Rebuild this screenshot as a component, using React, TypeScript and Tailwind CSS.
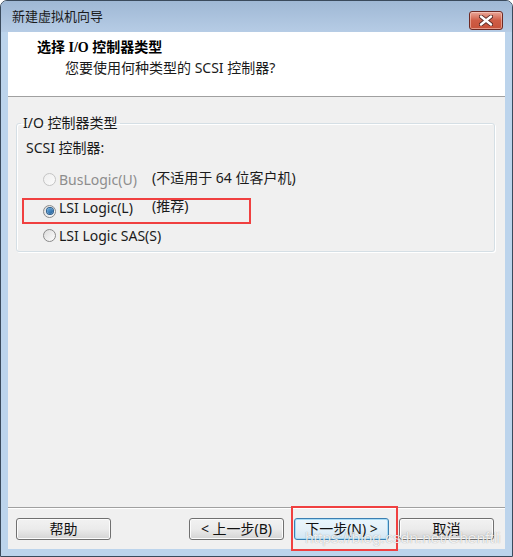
import React from "react";

const CJK = "font-['Noto_Sans','Noto_Sans_CJK_SC',sans-serif]";

function Radio({ checked, disabled }: { checked?: boolean; disabled?: boolean }) {
  return (
    <span
      className={
        "relative inline-flex items-center justify-center w-[13px] h-[13px] rounded-full border shrink-0 " +
        (disabled
          ? "border-[#c4c4c4] bg-gradient-to-br from-[#eeeeee] to-[#fbfbfb]"
          : "border-[#8a8a8a] bg-gradient-to-br from-[#dcdcdc] to-[#fdfdfd]")
      }
    >
      {checked && (
        <span className="w-[6px] h-[6px] rounded-full bg-gradient-to-br from-[#6fb3e6] to-[#1c5a96] ring-1 ring-[#2a5d8c]" />
      )}
    </span>
  );
}

function Btn({ children, def }: { children: React.ReactNode; def?: boolean }) {
  return (
    <div
      className={
        "w-[95px] h-[22px] rounded-[3px] border flex items-center justify-center text-[14px] leading-[18px] text-[#111] " +
        CJK +
        " " +
        (def
          ? "border-[#3c7fb1] bg-gradient-to-b from-[#eaf6fd] via-[#e4f0f8] to-[#d2e6f3] shadow-[inset_0_0_0_1px_#a8dcf6]"
          : "border-[#707070] bg-gradient-to-b from-[#f2f2f2] via-[#ebebeb] to-[#d4d4d4] shadow-[inset_0_0_0_1px_#fcfcfc]")
      }
    >
      {children}
    </div>
  );
}

export default function App() {
  return (
    <div className="relative w-[513px] h-[557px] bg-white">
      <div className="w-[513px] h-[557px] flex flex-col border border-[#3a4a5c] rounded-t-[7px] bg-[#bcd4ec] overflow-hidden">
        {/* title bar */}
        <div className="h-[31px] shrink-0 flex items-start justify-between pl-[11px] pr-[9px] bg-gradient-to-b from-[#9fb8d5] to-[#b6cce5]">
          <span className={"mt-[6px] text-[13px] leading-[18px] text-[#1a1a1a] " + CJK}>新建虚拟机向导</span>
          <div className="mt-[10px] w-[34px] h-[19px] rounded-[3px] border border-[#6e2a24] bg-gradient-to-b from-[#e9a799] via-[#cf5c45] to-[#c8523a] flex items-center justify-center shadow-[inset_0_0_0_1px_rgba(255,220,210,0.5)]">
            <svg width="14" height="11" viewBox="0 0 14 11">
              <path d="M2 1.5 L12 9.5 M12 1.5 L2 9.5" stroke="#5a2a25" strokeWidth="4.2" strokeLinecap="round" />
              <path d="M2 1.5 L12 9.5 M12 1.5 L2 9.5" stroke="#ffffff" strokeWidth="2.4" strokeLinecap="round" />
            </svg>
          </div>
        </div>

        {/* client */}
        <div className="flex-1 mx-[7px] mb-[7px] flex flex-col bg-[#f0f0f0]">
          {/* header */}
          <div className="h-[65px] shrink-0 bg-white border-b border-[#a0a0a0] pt-[7px]">
            <div className="pl-[29px] text-[14px] leading-[18px] font-bold text-[#000] font-['Liberation_Serif','Noto_Sans_CJK_SC',serif]">
              选择 I/O 控制器类型
            </div>
            <div className={"pl-[57px] mt-[2px] text-[14px] leading-[18px] text-[#1a1a1a] " + CJK}>
              您要使用何种类型的 SCSI 控制器?
            </div>
          </div>

          {/* body */}
          <div className="flex-1 flex flex-col">
            <fieldset className="ml-[8px] mr-[10px] mt-[17px] border border-[#d5dfe5] rounded-[3px] pl-[9px] pb-[1px] shadow-[inset_1px_1px_0_#ffffff,1px_1px_0_#ffffff]">
              <legend className={"-ml-[5px] px-[2px] text-[14px] leading-[18px] text-[#1a1a1a] " + CJK}>I/O 控制器类型</legend>
              <div className={"mt-[7px] text-[14px] leading-[18px] text-[#1a1a1a] " + CJK}>SCSI 控制器:</div>
              <div className="mt-[9px] flex flex-col">
                <div className="h-[28px] flex items-center">
                  <span className="ml-[17px]"><Radio disabled /></span>
                  <span className={"ml-[3px] w-[93px] text-[14px] leading-[18px] text-[#8d8d8d] " + CJK}>BusLogic(U)</span>
                  <span className={"text-[14px] leading-[18px] text-[#1a1a1a] -mt-[5px] " + CJK}>(不适用于 64 位客户机)</span>
                </div>
                <div className="h-[28px] flex items-center">
                  <span className="ml-[17px]"><Radio checked /></span>
                  <span className={"ml-[3px] w-[93px] text-[14px] leading-[18px] text-[#1a1a1a] " + CJK}>LSI Logic(L)</span>
                  <span className={"text-[14px] leading-[18px] text-[#1a1a1a] -mt-[5px] " + CJK}>(推荐)</span>
                </div>
                <div className="h-[28px] flex items-center">
                  <span className="ml-[17px]"><Radio /></span>
                  <span className={"ml-[3px] text-[14px] leading-[18px] text-[#1a1a1a] " + CJK}>LSI Logic SAS(S)</span>
                </div>
              </div>
            </fieldset>
          </div>

          {/* footer */}
          <div className="h-[42px] shrink-0 border-t border-[#a0a0a0] shadow-[inset_0_1px_0_#ffffff] pt-[10px] pl-[8px] pr-[11px] flex items-start justify-between">
            <Btn>帮助</Btn>
            <div className="flex gap-[10px]">
              <Btn>&lt; 上一步(B)</Btn>
              <Btn def>下一步(N) &gt;</Btn>
              <Btn>取消</Btn>
            </div>
          </div>
        </div>
      </div>

      {/* annotations */}
      <div className="absolute left-[22px] top-[198px] w-[229px] h-[26px] border-2 border-[#f04040] pointer-events-none" />
      <div className="absolute left-[291px] top-[506px] w-[107px] h-[45px] border-2 border-[#f04040] pointer-events-none" />
      <div className="absolute left-[305px] top-[528px] text-[15.5px] leading-[20px] text-white/85 font-['Liberation_Sans',sans-serif] [text-shadow:0_0_1px_rgba(0,0,0,0.4)] pointer-events-none">
        https://blog.csdn.net/Chenftli
      </div>
    </div>
  );
}
